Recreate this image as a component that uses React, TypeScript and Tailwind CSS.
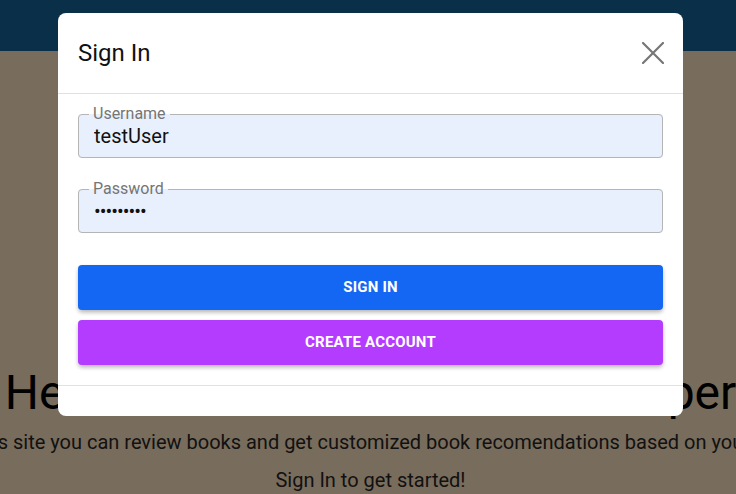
import React from "react";

function CloseIcon() {
  return (
    <svg width="22" height="22" viewBox="0 0 22 22" fill="none">
      <path d="M1 1 L21 21 M21 1 L1 21" stroke="#777777" strokeWidth="2.2" strokeLinecap="square" />
    </svg>
  );
}

interface FieldProps {
  label: string;
  value: string;
  type?: string;
}

function OutlinedField({ label, value, type = "text" }: FieldProps) {
  return (
    <fieldset className="rounded-[4px] border border-[#b5b5b5] bg-[#e8f0fe] px-[10px] pb-[8px]">
      <legend className="px-[4px] text-[16px] leading-[18px] text-[#757575]">{label}</legend>
      <input
        type={type}
        value={value}
        readOnly
        className={
          type === "password"
            ? "block h-[26px] w-full bg-transparent pl-[5px] text-[20px] leading-[26px] tracking-[-1px] text-[#111] outline-none"
            : "block h-[26px] w-full bg-transparent pl-[5px] text-[20px] leading-[26px] text-[#111] outline-none"
        }
      />
    </fieldset>
  );
}

export default function App() {
  return (
    <div className="relative h-[494px] w-full overflow-hidden bg-[#786c5c] font-['Roboto',sans-serif]">
      <div className="h-[51px] bg-[#0a3049]" />

      <main className="flex flex-col items-center pl-[5px] pt-[318px] text-black">
        <h1 className="whitespace-nowrap text-[48px] font-normal leading-[48px]">
          Hello and welcome to BookKeeper
        </h1>
        <p className="mt-[11px] whitespace-nowrap text-[20px] leading-[28px] text-[#111]">
          On this site you can review books and get customized book recomendations based on your likes
        </p>
        <p className="mt-[10px] whitespace-nowrap text-[20px] leading-[28px] text-[#111]">
          Sign In to get started!
        </p>
      </main>

      {/* modal */}
      <div className="absolute left-[58px] top-[13px] w-[625px] rounded-lg bg-white">
        <div className="flex h-[81px] items-center justify-between border-b border-[#dee2e6] px-5">
          <h4 className="text-[24px] font-normal leading-[29px] text-[#111]">Sign In</h4>
          <button className="mr-[-1px] flex items-center justify-center">
            <CloseIcon />
          </button>
        </div>

        <div className="flex flex-col px-5 pt-[11px] pb-[20px]">
          <OutlinedField label="Username" value="testUser" />
          <div className="mt-[22px]">
            <OutlinedField label="Password" value="123456789" type="password" />
          </div>

          <button className="mt-[32px] h-[45px] rounded-[4px] bg-[#1467f2] text-[15px] font-bold uppercase tracking-[0.2px] text-white shadow-[0_3px_5px_-1px_rgba(0,0,0,0.2),0_2px_4px_0_rgba(0,0,0,0.14)]">
            Sign In
          </button>
          <button className="mt-[10px] h-[45px] rounded-[4px] bg-[#b33cff] text-[15px] font-bold uppercase tracking-[0.2px] text-white shadow-[0_3px_5px_-1px_rgba(0,0,0,0.2),0_2px_4px_0_rgba(0,0,0,0.14)]">
            Create Account
          </button>
        </div>

        <div className="h-[31px] border-t border-[#dee2e6]" />
      </div>
    </div>
  );
}
